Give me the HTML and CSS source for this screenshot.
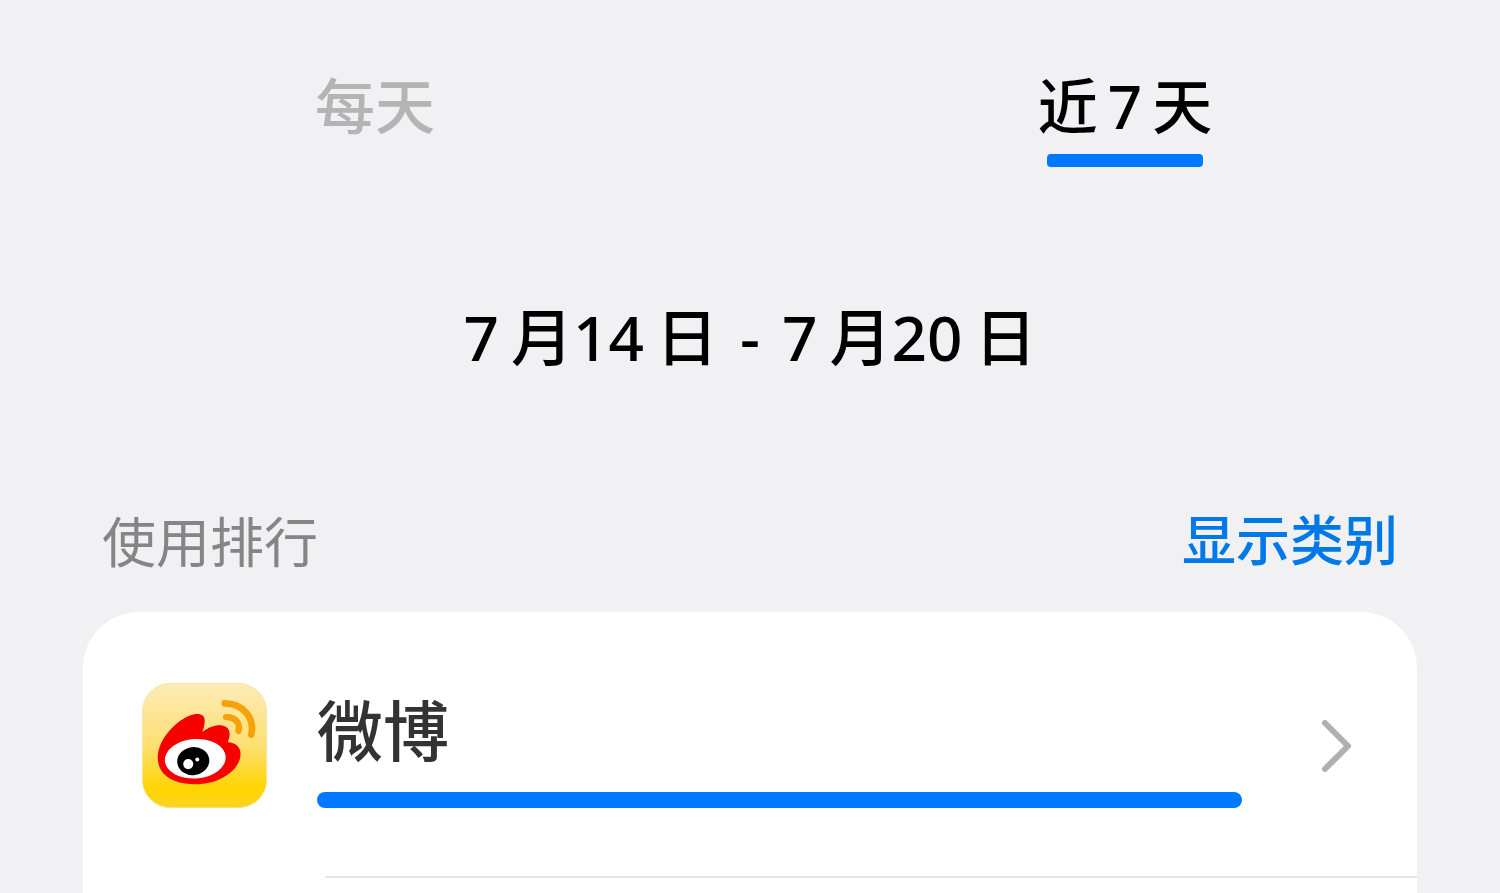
FILE: index.html
```html
<!DOCTYPE html>
<html lang="zh-CN">

<head>
    <meta charset="UTF-8">
    <meta name="viewport" content="width=device-width, initial-scale=1">
    <title>使用排行</title>
    <link rel="stylesheet" href="styles.css">
</head>

<body>
    <nav class="tabs">
        <button type="button" class="tab">每天</button>
        <button type="button" class="tab active">近<span class="num">7</span>天</button>
    </nav>

    <h1 class="date-range"><span class="num-start">7</span>月<span class="num-start">14</span>日<span class="dash"> - </span><span class="num-start">7</span>月<span class="num-start">20</span>日</h1>

    <div class="section-header">
        <h2>使用排行</h2>
        <button type="button" class="toggle">显示类别</button>
    </div>

    <ul class="card">
        <li>
            <a href="#weibo" class="app-row">
                <svg class="app-icon" viewBox="37 38 373 373" aria-hidden="true">
                    <defs>
                        <linearGradient id="bg" x1="0" y1="0" x2="0" y2="1">
                            <stop offset="0" stop-color="#fdebb8"/>
                            <stop offset="0.5" stop-color="#fde072"/>
                            <stop offset="0.85" stop-color="#fed400"/>
                            <stop offset="1" stop-color="#fbd420"/>
                        </linearGradient>
                    </defs>
                    <rect x="38" y="39" width="371" height="371" rx="84" fill="url(#bg)" stroke="#f3dfa0" stroke-width="2"/>
                    <path d="M84 262C84 218 116 177 151 151C177 132 207 124 219 136C227 145 225 160 217 185C241 164 272 159 288 169C301 177 301 195 293 214C316 217 331 228 331 249C331 278 309 304 279 320C247 338 207 344 166 338C113 330 84 302 84 262Z" fill="#f60000"/>
                    <ellipse cx="196" cy="264" rx="91" ry="59" fill="#fff" transform="rotate(-4 196 264)"/>
                    <ellipse cx="190" cy="271" rx="48" ry="42" fill="#000" transform="rotate(-8 190 271)"/>
                    <circle cx="175" cy="280" r="15" fill="#fff"/>
                    <circle cx="202" cy="266" r="6" fill="#fff"/>
                    <path d="M284 99C334 99 375 139 363 192" fill="none" stroke="#f5a20a" stroke-width="20" stroke-linecap="round"/>
                    <path d="M288 140C313 139 332 156 325 181" fill="none" stroke="#f5a20a" stroke-width="19" stroke-linecap="round"/>
                </svg>
                <div class="app-info">
                    <span class="app-name">微博</span>
                    <div class="bar">
                        <div class="bar-fill" style="width: 100%"></div>
                    </div>
                </div>
                <svg class="chevron" viewBox="0 0 30 52" aria-hidden="true">
                    <path d="M3 3L26 26L3 49" fill="none" stroke="#b0b0b0" stroke-width="6" stroke-linecap="round" stroke-linejoin="round"/>
                </svg>
            </a>
        </li>
    </ul>
</body>

</html>
```

FILE: styles.css
```css
* {
    box-sizing: border-box;
}

body {
    display: flex;
    flex-direction: column;
    min-height: 100vh;
    margin: 0;
    background-color: #f1f1f4;
    color: #000;
    font-family: "Noto Sans", "Noto Sans CJK SC", sans-serif;
}

h1,
h2,
ul {
    margin: 0;
    padding: 0;
    font-weight: 500;
}

button {
    padding: 0;
    border: 0;
    background: none;
    font-family: inherit;
    font-weight: 500;
    cursor: pointer;
}

.tabs {
    display: grid;
    grid-template-columns: 1fr 1fr;
    align-items: start;
    padding-top: 64px;
}

.tab {
    color: #b4b4b4;
    font-size: 60px;
    line-height: 84px;
}

.tab.active {
    color: #000;
}

.tab.active::after {
    content: "";
    display: block;
    width: 156px;
    height: 13px;
    margin: 6px auto 0;
    border-radius: 4px;
    background-color: #0079fe;
}

.num {
    margin: 0 10px;
}

.num-start {
    margin-right: 12px;
}

.dash {
    margin: 0 6px;
}

.date-range {
    padding-top: 128px;
    text-align: center;
    font-size: 62px;
    line-height: 84px;
}

.section-header {
    display: flex;
    justify-content: space-between;
    align-items: flex-start;
    padding: 125px 102px 32px;
}

.section-header h2,
.toggle {
    font-size: 54px;
    line-height: 76px;
}

.section-header h2 {
    color: #858585;
    font-weight: 400;
}

.toggle {
    color: #0079e8;
    line-height: 72px;
}

.card {
    flex: 1;
    margin: 0 83px;
    border-radius: 56px 56px 0 0;
    background-color: #fff;
    list-style: none;
}

.card li::after {
    content: "";
    display: block;
    height: 2px;
    margin-left: 242px;
    background-color: #e6e6e6;
}

.app-row {
    display: flex;
    align-items: center;
    padding: 71px 65px 68px 59px;
    color: #333;
    text-decoration: none;
}

.app-icon {
    width: 125px;
    height: 125px;
}

.app-info {
    flex: 1;
    margin: 0 80px 0 50px;
}

.app-name {
    display: block;
    font-size: 66px;
    line-height: 92px;
}

.bar {
    height: 16px;
    margin-top: 16px;
}

.bar-fill {
    height: 100%;
    border-radius: 8px;
    background-color: #0079fe;
}

.chevron {
    width: 30px;
    height: 52px;
}
```
